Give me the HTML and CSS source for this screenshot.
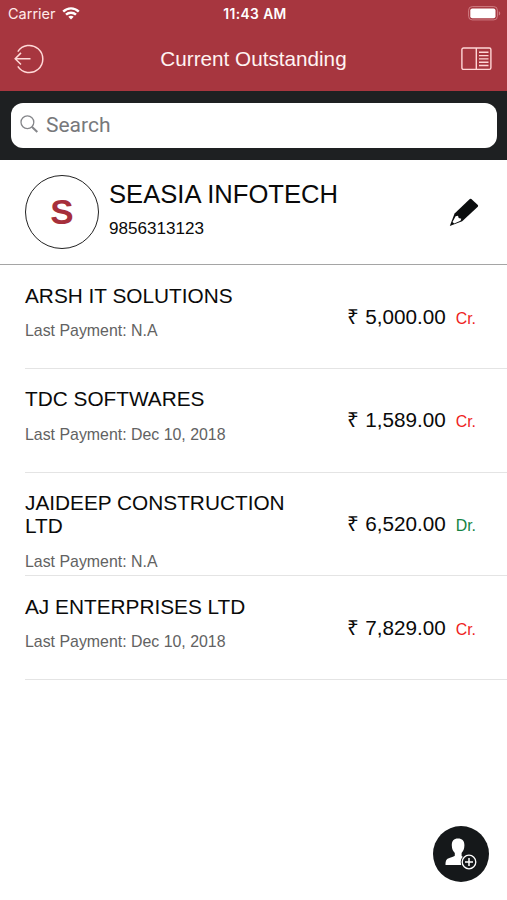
FILE: index.html
```html
<!DOCTYPE html>
<html lang="en">
<head>
<meta charset="utf-8">
<title>Current Outstanding</title>
<link rel="stylesheet" href="styles.css">
</head>
<body>
<header class="top">
  <div class="status">
    <div class="carrier">
      <span>Carrier</span>
      <svg class="wifi" width="18" height="13" viewBox="0 0 18 13" fill="none" stroke="#fff" stroke-width="2.4">
        <path d="M1.2 4.6C5.6.3 12.4.3 16.8 4.6M4 7.7c2.800-2.700 7.200-2.700 10 0"/>
        <path d="M9 12.400 6.300 9.700c1.600-1.400 3.800-1.400 5.400 0z" fill="#fff" stroke="none"/>
      </svg>
    </div>
    <span class="clock">11:43 AM</span>
    <svg class="battery" width="33" height="15" viewBox="0 0 33 15">
      <rect x=".6" y=".6" width="28.8" height="13.3" rx="3.6" fill="none" stroke="#cf7c82" stroke-width="1"/>
      <rect x="2.3" y="2.4" width="25.2" height="9.8" rx="2" fill="#fff"/>
      <path d="M30.8 5.2c1.9.7 1.9 3.6 0 4.4z" fill="#cf7c82"/>
    </svg>
  </div>
  <nav class="nav">
    <svg width="30" height="30" viewBox="0 0 30 30" fill="none" stroke="#ffd9d8" stroke-width="1.5">
      <path d="M3.800 7.600A13.600 13.600 0 1 1 3.800 22.400M1.200 14.700H16.500M7 8.900 1.200 14.700 7 20.500"/>
    </svg>
    <h1 class="title">Current Outstanding</h1>
    <svg width="31" height="24" viewBox="0 0 31 24" fill="none" stroke="#ffd6d6" stroke-width="1.4">
      <rect x=".9" y="1" width="29" height="21.400" rx="1.600"/>
      <path d="M15.300 1v21.400M18 5.300h9.500M18 8.600h9.500M18 11.900h9.500M18 15.200h9.500M18 18.500h9.500"/>
    </svg>
  </nav>
</header>
<div class="search-bar">
  <label class="search">
    <svg width="19" height="19" viewBox="0 0 19 19" fill="none" stroke="#85868a">
      <circle cx="7.400" cy="7.300" r="6.400" stroke-width="1.300"/>
      <path d="m11.800 11.800 5.500 5.200" stroke-width="2.100"/>
    </svg>
    <span>Search</span>
  </label>
</div>
<section class="profile">
  <div class="avatar">S</div>
  <div class="owner">
    <h2 class="owner-name">SEASIA INFOTECH</h2>
    <p class="phone">9856313123</p>
  </div>
  <svg class="edit" width="30" height="30" viewBox="0 0 30 30">
    <path d="M20.800 2Q21.600 1.300 22.400 2L28.800 8.100Q29.500 8.900 28.800 9.700L13.200 24.200.8 29 5.600 16.500z" fill="#0b0d0e"/>
    <path d="M6.600 19.300 9 18.800 9.700 21 12.300 21.700 11.500 23.700 5.200 26.400 3.500 25z" fill="#fff"/>
  </svg>
</section>
<main class="list">
  <article class="row">
    <div class="info"><h3 class="name">ARSH IT SOLUTIONS</h3><p class="last">Last Payment: N.A</p></div>
    <div class="money"><span class="amount">₹ 5,000.00</span><span class="kind">Cr.</span></div>
  </article>
  <article class="row">
    <div class="info"><h3 class="name">TDC SOFTWARES</h3><p class="last">Last Payment: Dec 10, 2018</p></div>
    <div class="money"><span class="amount">₹ 1,589.00</span><span class="kind">Cr.</span></div>
  </article>
  <article class="row">
    <div class="info"><h3 class="name">JAIDEEP CONSTRUCTION LTD</h3><p class="last">Last Payment: N.A</p></div>
    <div class="money"><span class="amount">₹ 6,520.00</span><span class="kind debit">Dr.</span></div>
  </article>
  <article class="row">
    <div class="info"><h3 class="name">AJ ENTERPRISES LTD</h3><p class="last">Last Payment: Dec 10, 2018</p></div>
    <div class="money"><span class="amount">₹ 7,829.00</span><span class="kind">Cr.</span></div>
  </article>
</main>
<button class="add" aria-label="Add customer">
  <svg width="56" height="56" viewBox="0 0 56 56">
    <path d="M25 12.500c4.200 0 6.600 2.600 6.400 7-.1 3.600-1.200 5.700-2.800 7.400v3.200c1.500 1.500 7.500 2.500 9.400 5.500V39H12.500c0-5.500 1.500-6 4.500-7.200 2.200-.8 4-1.300 4.800-2v-2.900c-1.700-1.700-2.900-3.800-3-7.400-.1-4.400 2-7 6.200-7z" fill="#fff"/>
    <circle cx="36" cy="36" r="8.300" fill="#15181a"/>
    <circle cx="36" cy="36" r="6.800" fill="#15181a" stroke="#fff" stroke-width="1.300"/>
    <path d="M36 32v8M32 36h8" stroke="#fff" stroke-width="1.500"/>
  </svg>
</button>
</body>
</html>
```
FILE: styles.css
```css
* { box-sizing: border-box; }
body {
  margin: 0;
  height: 900px;
  overflow: hidden;
  background: #fff;
  color: #0a0a0a;
  font-family: "Liberation Sans", Arial, sans-serif;
}
h1, h2, h3, p { margin: 0; font-weight: 400; }
svg { display: block; flex: none; }

.top { height: 91px; background: #a7363f; color: #fff; }
.status {
  display: grid;
  grid-template-columns: 1fr auto 1fr;
  align-items: center;
  height: 27px;
  padding: 0 6px 0 8px;
  font-family: Inter, sans-serif;
  font-size: 14.5px;
}
.carrier { display: flex; align-items: center; gap: 6px; color: #ffeaea; }
.clock { padding-left: 1px; font-weight: 600; font-size: 13.8px; letter-spacing: .4px; }
.battery { justify-self: end; }
.nav {
  display: flex;
  align-items: center;
  justify-content: space-between;
  height: 63px;
  padding: 0 15px 0 14px;
}
.title { padding-left: 2px; font-size: 20.7px; color: #fff3f2; }

.search-bar { height: 69px; padding: 12px 10px 0 11px; background: #1e2022; }
.search {
  display: flex;
  align-items: center;
  gap: 7px;
  height: 45px;
  padding: 0 0 2px 9px;
  border-radius: 12px;
  background: #fff;
  color: #77787b;
  font-family: Roboto, sans-serif;
  font-size: 21px;
}

.profile {
  display: flex;
  align-items: center;
  height: 105px;
  padding: 0 28px 0 25px;
  border-bottom: 1px solid #a5a5a5;
}
.avatar {
  display: flex;
  align-items: center;
  justify-content: center;
  width: 74px;
  height: 74px;
  border: 1.3px solid #222;
  border-radius: 50%;
  color: #a62f3b;
  font-size: 35px;
  font-weight: 700;
}
.owner { flex: 1; padding: 0 0 7px 10px; }
.owner-name { font-size: 25.6px; line-height: 30px; }
.phone { margin-top: 10px; font-size: 17.1px; line-height: 20px; }

.row {
  display: flex;
  justify-content: space-between;
  height: 103.8px;
  margin-left: 25px;
  padding: 18.5px 31px 0 0;
  border-bottom: 1px solid #e4e4e4;
}
.info { width: 280px; }
.name { font-size: 20.8px; line-height: 23px; }
.last { margin-top: 15.5px; color: #626262; font-size: 15.9px; line-height: 18px; }
.money { display: flex; align-items: baseline; gap: 10px; padding-top: 21px; white-space: nowrap; }
.amount { font-size: 20.7px; line-height: 24px; }
.kind { color: #ee2222; font-size: 15.9px; }
.debit { color: #158343; }

.add {
  position: fixed;
  right: 18px;
  bottom: 18px;
  width: 56px;
  height: 56px;
  padding: 0;
  border: 0;
  border-radius: 50%;
  background: #15181a;
}
```
